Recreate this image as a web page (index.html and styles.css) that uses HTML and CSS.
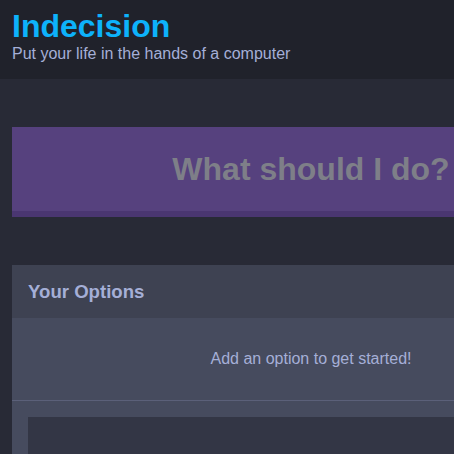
FILE: index.html
```html
<!DOCTYPE html>
<html>
<head>
<meta charset="utf-8">
<link rel="stylesheet" href="styles.css">
</head>
<body>
<header class="header">
  <div class="container">
    <h1 class="header__title">Indecision</h1>
    <h2 class="header__subtitle">Put your life in the hands of a computer</h2>
  </div>
</header>
<main class="container">
  <button class="big-button" disabled>What should I do?</button>
  <section class="widget">
    <div class="widget-header">
      <h3 class="widget-header__title">Your Options</h3>
    </div>
    <p class="widget__message">Add an option to get started!</p>
    <form class="add-option">
      <div class="add-option__input"></div>
    </form>
  </section>
</main>
</body>
</html>
```
FILE: styles.css
```css
html, body {
  margin: 0;
  padding: 0;
  overflow: hidden;
  height: 100%;
}
body {
  background: #282a36;
  font-family: "Liberation Sans", Arial, sans-serif;
  font-size: 16px;
  color: #a5afd7;
}
.container {
  width: 598px;
  padding: 0 12px;
  margin: 0;
}
.header {
  background: #20222b;
  padding: 8px 0 16px;
}
.header__title {
  margin: 0;
  font-size: 32px;
  font-weight: bold;
  color: #0db2fb;
}
.header__subtitle {
  margin: 0;
  font-size: 16px;
  font-weight: normal;
  color: #a5afd7;
}
.big-button {
  display: block;
  width: 100%;
  margin: 48px 0;
  padding: 24px;
  line-height: 36px;
  border: none;
  border-bottom: 6px solid #4a3671;
  background: #56417e;
  color: #7e7f88;
  font-family: "Liberation Sans", Arial, sans-serif;
  font-size: 32px;
  font-weight: bold;
}
.widget {
  background: #464b5e;
}
.widget-header {
  background: #3e4252;
  padding: 16px;
  height: 21px;
}
.widget-header__title {
  margin: 0;
  font-size: 18.6px;
  line-height: 21px;
  font-weight: bold;
  color: #a5afd7;
}
.widget__message {
  margin: 0;
  padding: 32px;
  text-align: center;
  border-bottom: 1px solid #5b6079;
  color: #a5afd7;
}
.add-option {
  padding: 16px;
  margin: 0;
}
.add-option__input {
  height: 60px;
  background: #333645;
}
```
